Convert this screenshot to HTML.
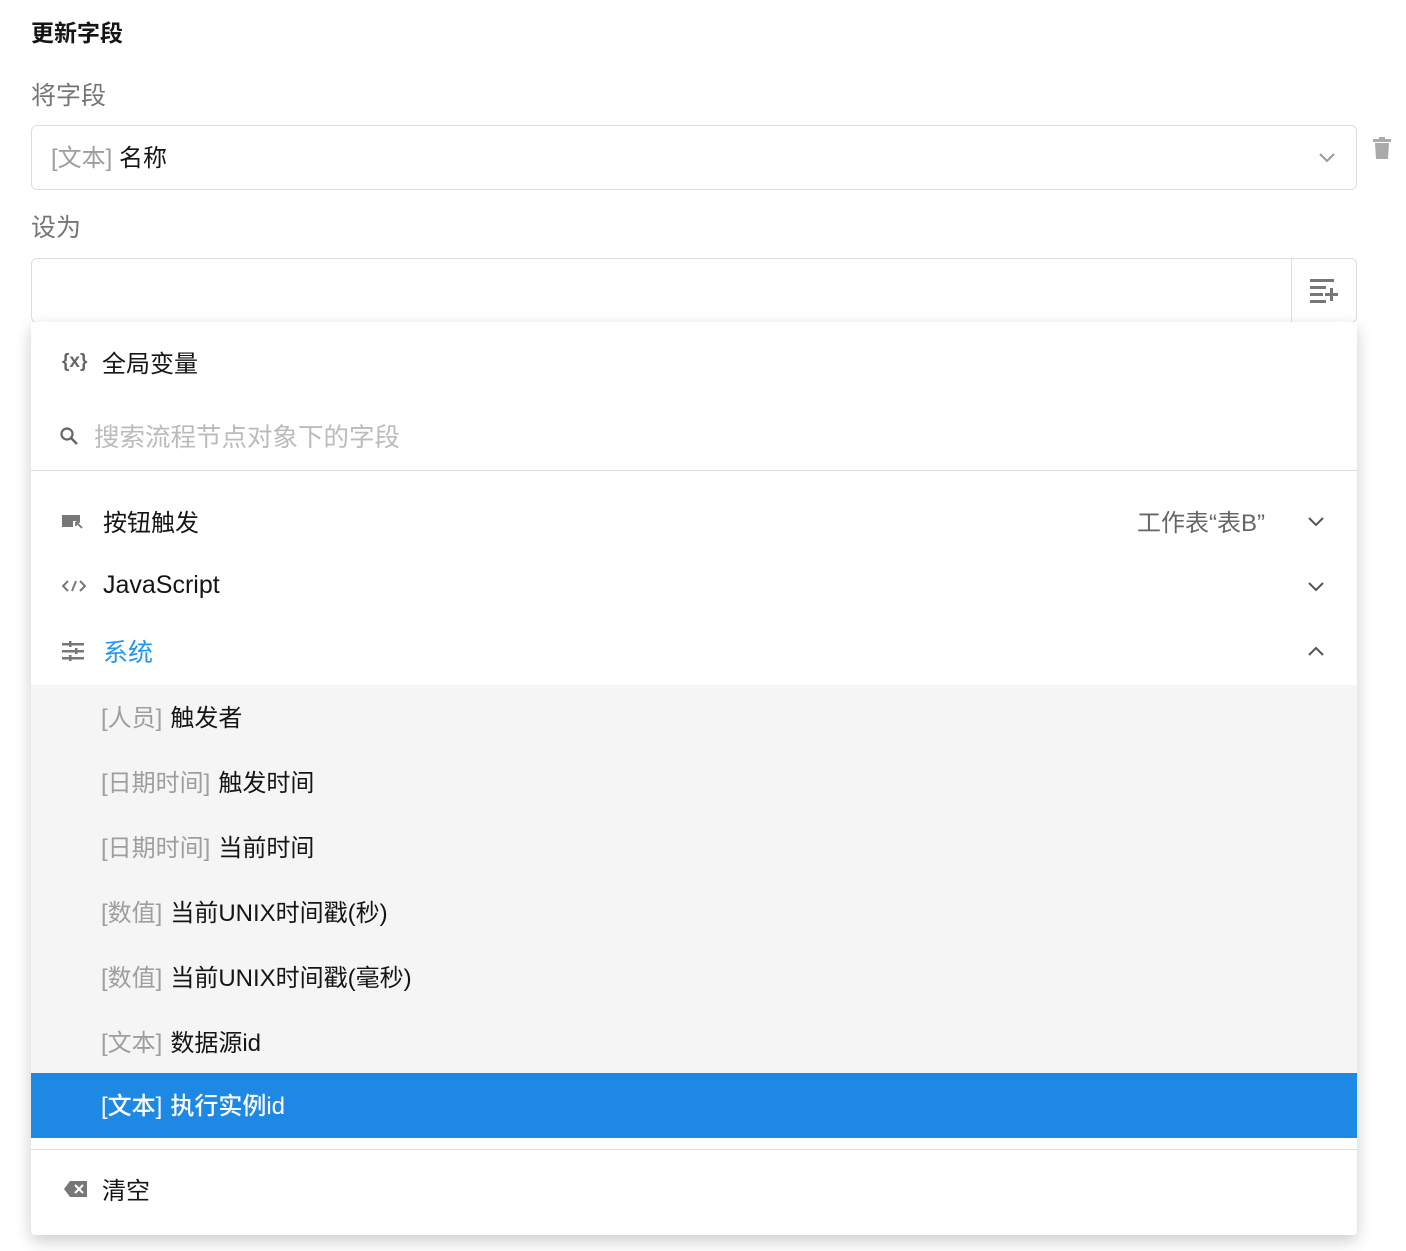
<!DOCTYPE html>
<html><head><meta charset="utf-8"><style>
*{box-sizing:border-box;margin:0;padding:0}
body{width:1406px;height:1251px;background:#fff;font-family:"Liberation Sans","Noto Sans CJK SC",sans-serif;color:#151515;position:relative;overflow:hidden}
.abs{position:absolute}
.t{font-size:23px;font-weight:bold;left:31px;top:14px}
.lbl{font-size:25px;color:#757575;left:31px}
.box{left:31px;width:1326px;border:1px solid #ddd;border-radius:6px;background:#fff}
.row{position:absolute;left:0;width:1326px;height:65px;display:flex;align-items:center;font-size:24px;padding-bottom:4px}
.sub{padding-left:70px;background:#f5f5f5}
.sub .g{color:#9e9e9e;margin-right:8px}
</style></head><body>
<div class="abs t">更新字段</div>
<div class="abs lbl" style="top:76px">将字段</div>
<div class="abs box" style="top:125px;height:65px;display:flex;align-items:center;padding-left:19px;padding-bottom:4px;font-size:24px"><span style="color:#9e9e9e">[文本]</span>&nbsp;名称
<svg class="abs" style="right:20px;top:25px" width="18" height="12" viewBox="0 0 18 12"><path d="M2 3l7 7 7-7" fill="none" stroke="#999" stroke-width="2"/></svg></div>
<svg class="abs" style="left:1372px;top:137px" width="20" height="24" viewBox="0 0 20 24"><rect x="1" y="2" width="18" height="3" fill="#aaa"/><rect x="7" y="0" width="6" height="3" fill="#aaa"/><path d="M3 6h14l-1 16H4z" fill="#aaa"/></svg>
<div class="abs lbl" style="top:208px">设为</div>
<div class="abs box" style="top:258px;height:65px">
<div class="abs" style="left:1259px;top:0;width:1px;height:63px;background:#ddd"></div>
<svg class="abs" style="left:1278px;top:20px" width="28" height="24" viewBox="0 0 28 24"><g fill="#777"><rect x="0" y="0" width="24" height="3"/><rect x="0" y="7" width="16" height="3"/><rect x="0" y="14" width="13" height="3"/><rect x="0" y="21" width="16" height="3"/><rect x="15" y="14" width="13" height="3"/><rect x="20" y="9" width="3" height="13"/></g></svg>
</div>
<div class="abs" style="left:31px;top:322px;width:1326px;height:913px;background:#fff;box-shadow:0 6px 16px rgba(0,0,0,.2);border-radius:0 0 4px 4px">
<div class="row" style="top:9px;padding-left:31px"><span style="font-weight:bold;color:#666;font-size:19px;width:40px">{x}</span>全局变量</div>
<div class="row" style="top:83px;padding-left:28px;color:#bbb;font-size:25.5px"><svg width="20" height="20" viewBox="0 0 20 20" style="margin-right:15px"><circle cx="8" cy="8" r="5.5" fill="none" stroke="#666" stroke-width="2.2"/><path d="M12 12l6 6" stroke="#666" stroke-width="2.5"/></svg>搜索流程节点对象下的字段</div>
<div class="abs" style="left:0;top:148px;width:1326px;height:1px;background:#ddd"></div>
<div class="row" style="top:168px;padding-left:31px"><svg width="24" height="16" viewBox="0 0 24 16" style="margin-right:17px"><path d="M0 2h18v6h-7v6H0z" fill="#777"/><path d="M14 9l6 6M14 9v4M14 9h4" stroke="#777" stroke-width="1.8" fill="none"/></svg>按钮触发<span style="margin-left:auto;color:#666;margin-right:42px">工作表“表B”</span><svg width="18" height="12" viewBox="0 0 18 12" style="margin-right:32px"><path d="M2 3l7 7 7-7" fill="none" stroke="#555" stroke-width="2"/></svg></div>
<div class="row" style="top:233px;padding-left:31px;font-size:25px"><svg width="24" height="14" viewBox="0 0 24 14" style="margin-right:17px"><path d="M6 2L1 7l5 5M18 2l5 5-5 5M14 2l-4 10" fill="none" stroke="#777" stroke-width="2"/></svg>JavaScript<svg width="18" height="12" viewBox="0 0 18 12" style="margin-left:auto;margin-right:32px"><path d="M2 3l7 7 7-7" fill="none" stroke="#555" stroke-width="2"/></svg></div>
<div class="row" style="top:298px;padding-left:31px;color:#2196f3;font-size:25px"><svg width="22" height="20" viewBox="0 0 22 20" style="margin-right:19px"><g fill="#777"><rect x="0" y="2" width="22" height="2.5"/><rect x="0" y="9" width="22" height="2.5"/><rect x="0" y="16" width="22" height="2.5"/><rect x="7" y="0" width="2.5" height="6" /><rect x="13" y="7" width="2.5" height="6"/><rect x="7" y="14" width="2.5" height="6"/></g></svg>系统<svg width="18" height="12" viewBox="0 0 18 12" style="margin-left:auto;margin-right:32px"><path d="M2 10l7-7 7 7" fill="none" stroke="#555" stroke-width="2"/></svg></div>
<div class="row sub" style="top:363px"><span class="g">[人员]</span>触发者</div>
<div class="row sub" style="top:428px"><span class="g">[日期时间]</span>触发时间</div>
<div class="row sub" style="top:493px"><span class="g">[日期时间]</span>当前时间</div>
<div class="row sub" style="top:558px"><span class="g">[数值]</span>当前UNIX时间戳(秒)</div>
<div class="row sub" style="top:623px"><span class="g">[数值]</span>当前UNIX时间戳(毫秒)</div>
<div class="row sub" style="top:688px"><span class="g">[文本]</span>数据源id</div>
<div class="row sub" style="top:751px;background:#1e88e5;color:#fff;font-weight:500"><span style="margin-right:8px">[文本]</span>执行实例id</div>
<div class="abs" style="left:0;top:827px;width:1326px;height:1px;background:#ddd"></div>
<div class="row" style="top:836px;padding-left:33px"><svg width="24" height="18" viewBox="0 0 24 18" style="margin-right:14px"><path d="M6 1h17v16H6L0 9z" fill="#777"/><path d="M11 5l8 8M19 5l-8 8" stroke="#fff" stroke-width="2"/></svg>清空</div>
</div>
</body></html>
